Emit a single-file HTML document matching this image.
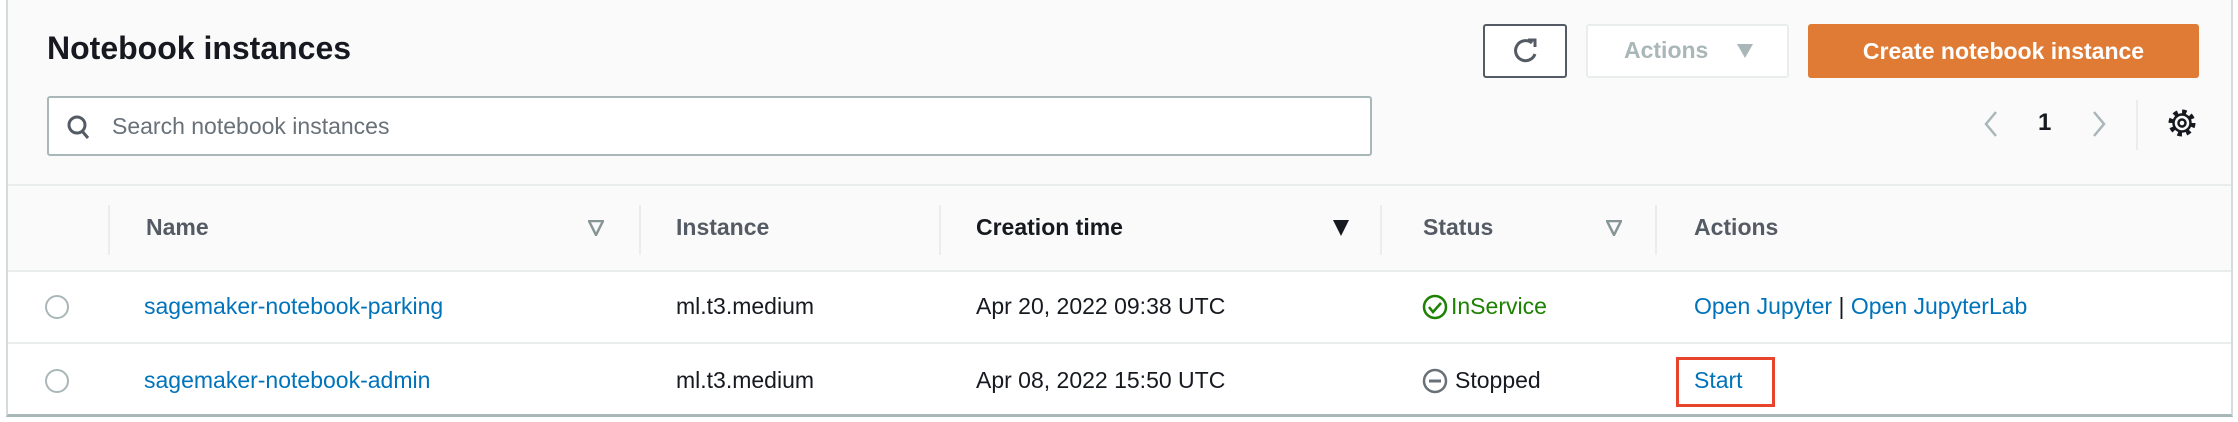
<!DOCTYPE html>
<html><head><meta charset="utf-8"><style>
*{box-sizing:border-box;margin:0;padding:0}
body{width:2238px;height:422px;background:#fff;font-family:"Liberation Sans",sans-serif;position:relative;overflow:hidden}
.a{position:absolute}
.t{font-size:23px;color:#16191f;white-space:nowrap}
.h{font-size:23px;font-weight:bold;color:#545b64;white-space:nowrap}
.l{color:#0073bb}
.vd{position:absolute;width:2px;background:#eaeded;top:205px;height:50px}
</style></head><body>
<div class="a" style="left:6px;top:0;width:2227px;height:417px;background:#fafafa;border-left:2px solid #d5dbdb;border-right:2px solid #d5dbdb;border-bottom:3px solid #aab7b8"></div>
<div class="a" style="left:8px;top:270px;width:2223px;height:144px;background:#fff"></div>
<div class="a" style="left:8px;top:184px;width:2223px;height:2px;background:#eaeded"></div>
<div class="a" style="left:8px;top:270px;width:2223px;height:2px;background:#eaeded"></div>
<div class="a" style="left:8px;top:342px;width:2223px;height:2px;background:#eaeded"></div>
<div class="a" style="left:47px;top:30px;font-size:32px;font-weight:bold;color:#16191f">Notebook instances</div>
<div class="a" style="left:47px;top:96px;width:1325px;height:60px;border:2px solid #aab7b8;border-radius:3px;background:#fff"></div>
<svg class="a" style="left:66px;top:114px" width="26" height="26" viewBox="0 0 26 26"><circle cx="11" cy="11" r="8" fill="none" stroke="#545b64" stroke-width="3"/><path d="M16 17l6 7" stroke="#545b64" stroke-width="3"/></svg>
<div class="a t" style="left:112px;top:113px;color:#687078">Search notebook instances</div>
<div class="a" style="left:1483px;top:24px;width:84px;height:54px;border:2px solid #545b64;border-radius:3px;background:#fff"></div>
<svg class="a" style="left:1512px;top:37px" width="28" height="28" viewBox="0 0 28 28"><path d="M20 6A10 10 0 1 0 23 17" fill="none" stroke="#545b64" stroke-width="3"/><path d="M16 3h7v7" fill="none" stroke="#545b64" stroke-width="3"/></svg>
<div class="a" style="left:1586px;top:24px;width:203px;height:54px;border:2px solid #eaeded;border-radius:3px;background:#fff"></div>
<div class="a" style="left:1624px;top:37px;font-size:23px;font-weight:bold;color:#aab7b8">Actions</div>
<svg class="a" style="left:1737px;top:44px" width="16" height="14"><path d="M0 0h16L8 14z" fill="#aab7b8"/></svg>
<div class="a" style="left:1808px;top:24px;width:391px;height:54px;background:#e07b35;border-radius:3px;color:#fff;font-size:23px;font-weight:bold;text-align:center;line-height:54px">Create notebook instance</div>
<svg class="a" style="left:1983px;top:110px" width="16" height="28"><path d="M13 2L3 14l10 12" fill="none" stroke="#aab7b8" stroke-width="2.5"/></svg>
<div class="a" style="left:2038px;top:109px;font-size:24px;font-weight:bold;color:#16191f">1</div>
<svg class="a" style="left:2091px;top:110px" width="16" height="28"><path d="M3 2l10 12L3 26" fill="none" stroke="#aab7b8" stroke-width="2.5"/></svg>
<div class="a" style="left:2136px;top:100px;width:2px;height:50px;background:#eaeded"></div>
<svg class="a" style="left:2167px;top:108px" width="30" height="30" viewBox="0 0 30 30"><circle cx="15" cy="15" r="11" fill="none" stroke="#16191f" stroke-width="5" stroke-dasharray="4.3 4.3"/><circle cx="15" cy="15" r="8.5" fill="none" stroke="#16191f" stroke-width="2.5"/><circle cx="15" cy="15" r="3.5" fill="none" stroke="#16191f" stroke-width="2.5"/></svg>
<div class="vd" style="left:108px"></div><div class="vd" style="left:639px"></div><div class="vd" style="left:939px"></div><div class="vd" style="left:1380px"></div><div class="vd" style="left:1655px"></div>
<div class="a h" style="left:146px;top:214px">Name</div>
<svg class="a" style="left:588px;top:220px" width="16" height="16"><path d="M1 1h14L8 15z" fill="none" stroke="#879596" stroke-width="2.5"/></svg>
<div class="a h" style="left:676px;top:214px">Instance</div>
<div class="a h" style="left:976px;top:214px;color:#16191f">Creation time</div>
<svg class="a" style="left:1333px;top:220px" width="16" height="16"><path d="M0 0h16L8 16z" fill="#16191f"/></svg>
<div class="a h" style="left:1423px;top:214px">Status</div>
<svg class="a" style="left:1606px;top:220px" width="16" height="16"><path d="M1 1h14L8 15z" fill="none" stroke="#879596" stroke-width="2.5"/></svg>
<div class="a h" style="left:1694px;top:214px">Actions</div>
<div class="a" style="left:45px;top:295px;width:24px;height:24px;border:2px solid #aab7b8;border-radius:50%;background:#fff"></div>
<div class="a" style="left:45px;top:369px;width:24px;height:24px;border:2px solid #aab7b8;border-radius:50%;background:#fff"></div>
<div class="a t l" style="left:144px;top:293px">sagemaker-notebook-parking</div>
<div class="a t" style="left:676px;top:293px">ml.t3.medium</div>
<div class="a t" style="left:976px;top:293px">Apr 20, 2022 09:38 UTC</div>
<svg class="a" style="left:1422px;top:294px" width="26" height="26"><circle cx="13" cy="13" r="11" fill="none" stroke="#1d8102" stroke-width="2.5"/><path d="M7 13l4 5 8-9" fill="none" stroke="#1d8102" stroke-width="2.5"/></svg>
<div class="a t" style="left:1451px;top:293px;color:#1d8102">InService</div>
<div class="a t" style="left:1694px;top:293px"><span class="l">Open Jupyter</span> | <span class="l">Open JupyterLab</span></div>
<div class="a t l" style="left:144px;top:367px">sagemaker-notebook-admin</div>
<div class="a t" style="left:676px;top:367px">ml.t3.medium</div>
<div class="a t" style="left:976px;top:367px">Apr 08, 2022 15:50 UTC</div>
<svg class="a" style="left:1422px;top:368px" width="26" height="26"><circle cx="13" cy="13" r="11" fill="none" stroke="#687078" stroke-width="2.5"/><path d="M7 13h12" stroke="#687078" stroke-width="3"/></svg>
<div class="a t" style="left:1455px;top:367px">Stopped</div>
<div class="a" style="left:1676px;top:357px;width:99px;height:50px;border:3px solid #e8432c"></div>
<div class="a t l" style="left:1694px;top:367px">Start</div>
</body></html>
